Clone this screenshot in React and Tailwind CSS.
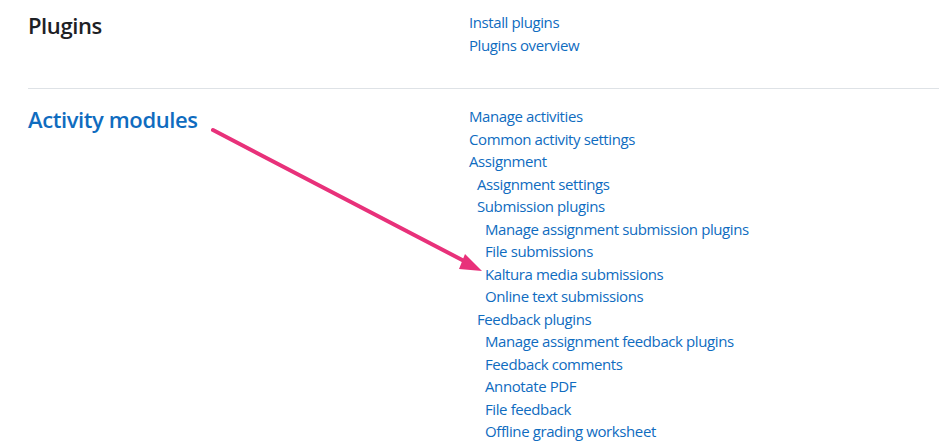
export default function App() {
  const plugins = ["Install plugins", "Plugins overview"];

  const activities = [
    { name: "Manage activities", level: 0 },
    { name: "Common activity settings", level: 0 },
    { name: "Assignment", level: 0 },
    { name: "Assignment settings", level: 1 },
    { name: "Submission plugins", level: 1 },
    { name: "Manage assignment submission plugins", level: 2 },
    { name: "File submissions", level: 2 },
    { name: "Kaltura media submissions", level: 2 },
    { name: "Online text submissions", level: 2 },
    { name: "Feedback plugins", level: 1 },
    { name: "Manage assignment feedback plugins", level: 2 },
    { name: "Feedback comments", level: 2 },
    { name: "Annotate PDF", level: 2 },
    { name: "File feedback", level: 2 },
    { name: "Offline grading worksheet", level: 2 },
  ];

  const indent = ["pl-0", "pl-2", "pl-4"];

  return (
    <div
      className="relative min-h-screen bg-white overflow-hidden"
      style={{ fontFamily: '"Open Sans", "Noto Sans", sans-serif' }}
    >
      <div className="pl-7">
        {/* Plugins */}
        <div className="flex pt-[11px] pb-8">
          <h3 className="w-[441px] shrink-0 text-[22px] leading-[28px] font-semibold tracking-[-0.4px] text-[#1d2125]">
            Plugins
          </h3>
          <ul className="text-[15px] leading-[22.5px] tracking-[-0.4px] text-[#0f6cbf]">
            {plugins.map((p) => (
              <li key={p}>{p}</li>
            ))}
          </ul>
        </div>

        <hr className="border-t border-[#dee2e6]" />

        {/* Activity modules */}
        <div className="flex pt-4">
          <h3 className="w-[441px] shrink-0 text-[22px] leading-[28px] font-semibold tracking-[-0.4px] text-[#0f6cbf]">
            Activity modules
          </h3>
          <ul className="text-[15px] leading-[22.5px] tracking-[-0.4px] text-[#0f6cbf]">
            {activities.map((a) => (
              <li key={a.name} className={indent[a.level]}>
                {a.name}
              </li>
            ))}
          </ul>
        </div>
      </div>

      {/* annotation arrow */}
      <svg className="absolute left-0 top-0 pointer-events-none" width="939" height="447">
        <line x1="213" y1="130" x2="466" y2="262" stroke="#e8317a" strokeWidth="4" strokeLinecap="round" />
        <polygon points="482,271 459,269 465,254" fill="#e8317a" />
      </svg>
    </div>
  );
}
